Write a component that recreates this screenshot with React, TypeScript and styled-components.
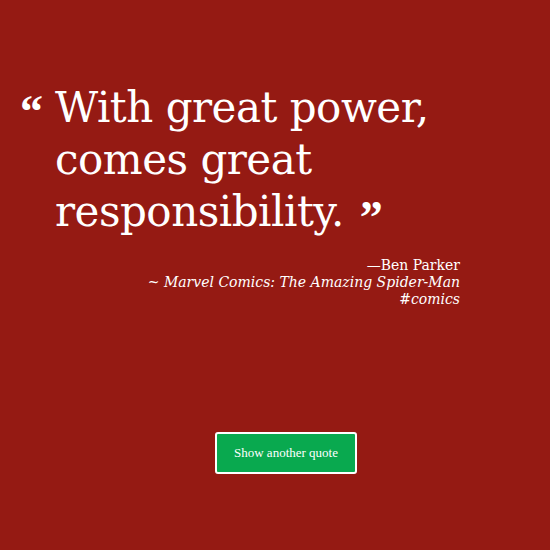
import React from "react";
import styled, { createGlobalStyle } from "styled-components";

const Global = createGlobalStyle`
  html, body { margin: 0; padding: 0; background: #951a13; }
  body { font-family: "DejaVu Serif", "Liberation Serif", serif; color: #fff; }
`;

const Page = styled.main`
  width: 550px;
  height: 550px;
  background: #951a13;
  display: flex;
  flex-direction: column;
  align-items: flex-start;
  box-sizing: border-box;
  padding: 82px 0 0 20px;
`;

const QuoteBox = styled.section`
  width: 440px;
  display: flex;
  flex-direction: column;
`;

const QuoteRow = styled.div`
  display: flex;
  align-items: flex-start;
`;

const Mark = styled.span<{ $close?: boolean }>`
  font-family: "Liberation Serif", serif;
  font-size: 46px;
  font-weight: bold;
  line-height: 1;
  color: #fff;
  ${(p) =>
    p.$close
      ? "margin-left: 16px; vertical-align: -7px; line-height: 0;"
      : "width: 35px; padding-top: 7px;"}
`;

const QuoteText = styled.blockquote`
  margin: 0;
  font-size: 42px;
  line-height: 52px;
  letter-spacing: -0.5px;
  flex: 1;
`;

const Attribution = styled.div`
  margin-top: 19px;
  text-align: right;
  font-size: 14px;
  line-height: 17px;
`;

const Work = styled.div`
  font-style: italic;
`;

const Actions = styled.div`
  margin-top: 124px;
  margin-left: 195px;
`;

const Button = styled.button`
  box-sizing: border-box;
  font-family: "Liberation Serif", serif;
  font-size: 13px;
  color: #fff;
  background: #09a94f;
  border: 2px solid #fff;
  border-radius: 3px;
  width: 142px;
  height: 42px;
  cursor: pointer;
`;

export default function App() {
  return (
    <>
      <Global />
      <Page>
        <QuoteBox>
          <QuoteRow>
            <Mark>“</Mark>
            <QuoteText>
              With great power, comes great responsibility.
              <Mark $close>”</Mark>
            </QuoteText>
          </QuoteRow>
          <Attribution>
            <div>—Ben Parker</div>
            <Work>~ Marvel Comics: The Amazing Spider-Man</Work>
            <Work>#comics</Work>
          </Attribution>
        </QuoteBox>
        <Actions>
          <Button>Show another quote</Button>
        </Actions>
      </Page>
    </>
  );
}
